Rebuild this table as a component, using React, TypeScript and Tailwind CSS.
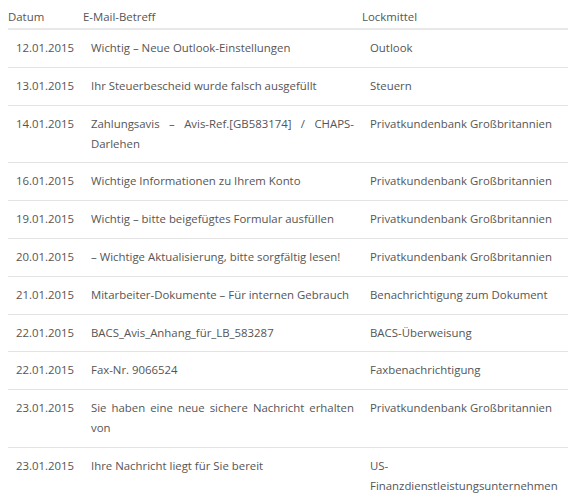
const rows: [string, string, string][] = [
  ["12.01.2015", "Wichtig – Neue Outlook-Einstellungen", "Outlook"],
  ["13.01.2015", "Ihr Steuerbescheid wurde falsch ausgefüllt", "Steuern"],
  ["14.01.2015", "Zahlungsavis – Avis-Ref.[GB583174] / CHAPS-Darlehen", "Privatkundenbank Großbritannien"],
  ["16.01.2015", "Wichtige Informationen zu Ihrem Konto", "Privatkundenbank Großbritannien"],
  ["19.01.2015", "Wichtig – bitte beigefügtes Formular ausfüllen", "Privatkundenbank Großbritannien"],
  ["20.01.2015", "– Wichtige Aktualisierung, bitte sorgfältig lesen!", "Privatkundenbank Großbritannien"],
  ["21.01.2015", "Mitarbeiter-Dokumente – Für internen Gebrauch", "Benachrichtigung zum Dokument"],
  ["22.01.2015", "BACS_Avis_Anhang_für_LB_583287", "BACS-Überweisung"],
  ["22.01.2015", "Fax-Nr. 9066524", "Faxbenachrichtigung"],
  ["23.01.2015", "Sie haben eine neue sichere Nachricht erhalten von", "Privatkundenbank Großbritannien"],
  ["23.01.2015", "Ihre Nachricht liegt für Sie bereit", "US-Finanzdienstleistungsunternehmen"],
];

export default function App() {
  return (
    <div className="bg-white w-[582px] h-[503px] overflow-hidden pl-2" style={{ fontFamily: '"Open Sans", sans-serif' }}>
      <table className="w-[560px] table-fixed border-collapse text-[11.4px] leading-[20px] text-[#555]">
        <colgroup>
          <col className="w-[75px]" />
          <col className="w-[279px]" />
          <col className="w-[206px]" />
        </colgroup>
        <thead>
          <tr className="border-b-2 border-[#e8e8e8]">
            <th className="text-left font-normal pt-[7px] pb-px pr-2 align-top">Datum</th>
            <th className="text-left font-normal pt-[7px] pb-px pr-2 align-top">E-Mail-Betreff</th>
            <th className="text-left font-normal pt-[7px] pb-px pr-2 align-top">Lockmittel</th>
          </tr>
        </thead>
        <tbody>
          {rows.map((r, i) => (
            <tr key={i} className="border-b border-[#e3e3e3] last:border-b-0">
              <td className="pl-2 pr-1 pt-[8px] pb-[8.8px] align-top whitespace-nowrap">{r[0]}</td>
              <td className="pl-2 pr-2 pt-[8px] pb-[8.8px] align-top text-justify">{r[1]}</td>
              <td className="pl-2 pr-2 pt-[8px] pb-[8.8px] align-top">{r[2]}</td>
            </tr>
          ))}
        </tbody>
      </table>
    </div>
  );
}
